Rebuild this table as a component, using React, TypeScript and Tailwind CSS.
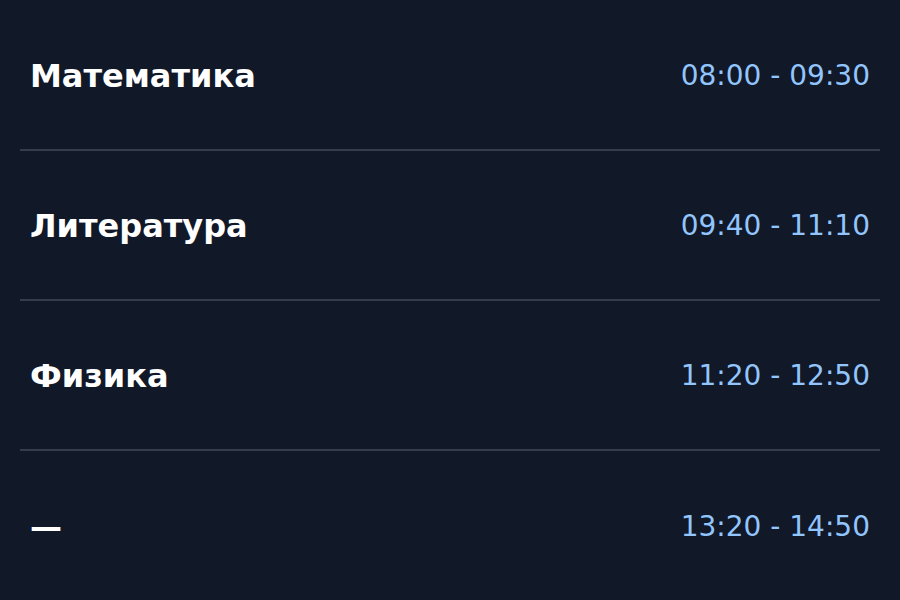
const lessons = [
  { subject: "Математика", time: "08:00 - 09:30" },
  { subject: "Литература", time: "09:40 - 11:10" },
  { subject: "Физика", time: "11:20 - 12:50" },
  { subject: "—", time: "13:20 - 14:50" },
];

export default function App() {
  return (
    <div className="w-[900px] h-[600px] bg-[#111827] px-5 flex flex-col font-['DejaVu_Sans',sans-serif]">
      {lessons.map((lesson, index) => (
        <div
          key={index}
          className={`flex items-center justify-between px-[10px] pt-[2px] ${
            index === 0
              ? "h-[151px] border-b-2 border-[#363d4a]"
              : index < lessons.length - 1
              ? "h-[150px] border-b-2 border-[#363d4a]"
              : "flex-1"
          }`}
        >
          <span className="text-[32px] font-bold text-white">{lesson.subject}</span>
          <span className="text-[28px] text-[#93c5fd]">{lesson.time}</span>
        </div>
      ))}
    </div>
  );
}
